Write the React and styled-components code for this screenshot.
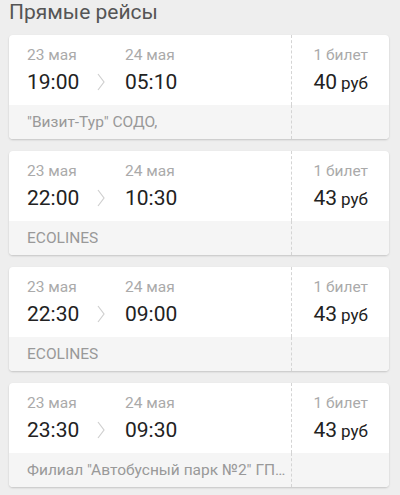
import React from 'react';
import styled, { createGlobalStyle } from 'styled-components';

const GlobalStyle = createGlobalStyle`
  html, body {
    margin: 0;
    padding: 0;
    background: #eeeeee;
    font-family: Roboto, "Noto Sans", "Liberation Sans", sans-serif;
  }
`;

const Page = styled.div`
  padding: 0 11px 0 9px;
  height: 495px;
  overflow: hidden;
`;

const Title = styled.h2`
  margin: 0 0 11px;
  font-size: 21px;
  line-height: 24px;
  font-weight: 400;
  color: #555;
`;

const List = styled.div`
  display: flex;
  flex-direction: column;
  gap: 12px;
`;

const Card = styled.div`
  display: grid;
  grid-template-columns: 1fr 98px;
  grid-template-rows: 70px 34px;
  background: #fff;
  border-radius: 4px;
  overflow: hidden;
  box-shadow: 0 1px 2px rgba(0, 0, 0, 0.18);
`;

const Trip = styled.div`
  display: grid;
  grid-template-columns: 70px 28px auto;
  align-items: start;
  padding: 11px 0 0 18px;
  box-sizing: border-box;
`;

const Point = styled.div`
  display: flex;
  flex-direction: column;
`;

const DateText = styled.div`
  font-size: 15.5px;
  line-height: 18px;
  color: #aaa;
`;

const Time = styled.div`
  margin-top: 5px;
  font-size: 21px;
  line-height: 26px;
  color: #222;
`;

const Arrow = styled.div`
  display: flex;
  padding-top: 27px;
`;

const Side = styled.div`
  border-left: 1px dashed #d4d4d4;
  display: flex;
  flex-direction: column;
  align-items: flex-end;
  padding: 11px 21px 0 0;
  box-sizing: border-box;
`;

const Price = styled.div`
  margin-top: 5px;
  line-height: 26px;
  color: #222;
`;

const Amount = styled.span`
  font-size: 21px;
`;

const Currency = styled.span`
  font-size: 17px;
`;

const Footer = styled.div`
  background: #f5f5f5;
  display: flex;
  align-items: center;
  padding: 0 4px 0 18px;
  min-width: 0;
  font-size: 15.5px;
  color: #999;
`;

const Carrier = styled.span`
  white-space: nowrap;
  overflow: hidden;
  text-overflow: ellipsis;
`;

const FooterSide = styled.div`
  background: #f5f5f5;
  border-left: 1px dashed #d4d4d4;
`;

const Chevron = () => (
  <svg width="8" height="18" viewBox="0 0 8 18">
    <polyline points="1,1 7,9 1,17" fill="none" stroke="#cfcfcf" strokeWidth="1.2" />
  </svg>
);

const trips = [
  { from: '19:00', to: '05:10', price: 40, carrier: '"Визит-Тур" СОДО,' },
  { from: '22:00', to: '10:30', price: 43, carrier: 'ECOLINES' },
  { from: '22:30', to: '09:00', price: 43, carrier: 'ECOLINES' },
  { from: '23:30', to: '09:30', price: 43, carrier: 'Филиал "Автобусный парк №2" ГП "Минсктранс"' },
];

const App = () => (
  <Page>
    <GlobalStyle />
    <Title>Прямые рейсы</Title>
    <List>
      {trips.map((t, i) => (
        <Card key={i}>
          <Trip>
            <Point>
              <DateText>23 мая</DateText>
              <Time>{t.from}</Time>
            </Point>
            <Arrow>
              <Chevron />
            </Arrow>
            <Point>
              <DateText>24 мая</DateText>
              <Time>{t.to}</Time>
            </Point>
          </Trip>
          <Side>
            <DateText>1 билет</DateText>
            <Price>
              <Amount>{t.price}</Amount> <Currency>руб</Currency>
            </Price>
          </Side>
          <Footer>
            <Carrier>{t.carrier}</Carrier>
          </Footer>
          <FooterSide />
        </Card>
      ))}
    </List>
  </Page>
);

export default App;
